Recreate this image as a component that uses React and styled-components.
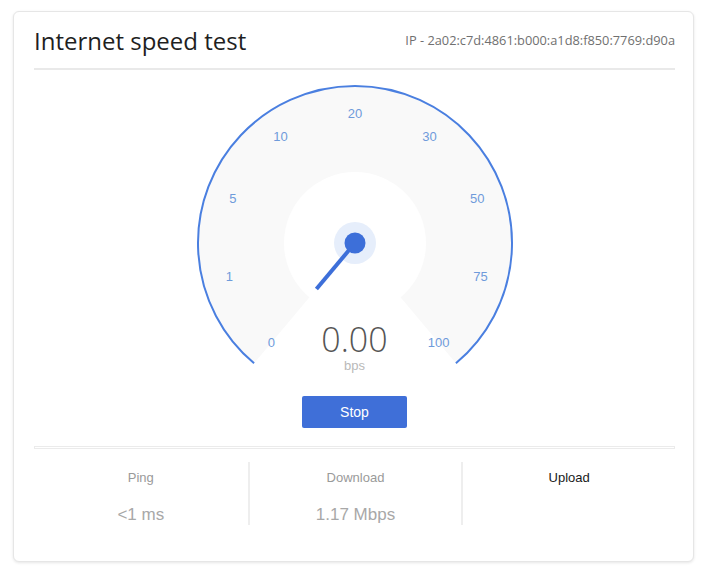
import React from 'react';
import styled, { createGlobalStyle } from 'styled-components';

const GlobalStyle = createGlobalStyle`
  html, body {
    margin: 0;
    padding: 0;
    background: #ffffff;
  }
  body {
    font-family: "Liberation Sans", Arial, sans-serif;
  }
`;

const Page = styled.div`
  padding: 11px 8px 5px 13px;
`;

const Card = styled.div`
  background: #fff;
  border: 1px solid #e6e6e6;
  border-radius: 6px;
  box-shadow: 0 1px 3px rgba(0, 0, 0, 0.1);
  padding: 0 18px 36px 20px;
`;

const Header = styled.div`
  display: flex;
  justify-content: space-between;
  align-items: center;
  height: 56px;
  border-bottom: 2px solid #e9e9e9;
`;

const Title = styled.h1`
  margin: 0;
  font-family: "Open Sans", sans-serif;
  font-weight: 400;
  font-size: 24px;
  color: #1f1f1f;
`;

const Ip = styled.span`
  font-family: "Open Sans", sans-serif;
  font-size: 12.8px;
  color: #707070;
`;

const GaugeWrap = styled.div`
  position: relative;
  width: 320px;
  height: 295px;
  margin: 13px auto 0;

  svg {
    display: block;
  }
`;

const Readout = styled.div`
  position: absolute;
  top: 238px;
  left: 0;
  right: 0;
  text-align: center;
`;

const Speed = styled.div`
  font-family: "Open Sans", sans-serif;
  font-weight: 300;
  font-size: 34px;
  line-height: 36px;
  color: #555;
`;

const Unit = styled.div`
  margin-top: 1px;
  font-size: 13px;
  line-height: 16px;
  color: #b9b9b9;
`;

const ButtonRow = styled.div`
  display: flex;
  justify-content: center;
  margin-top: 18px;
`;

const StopButton = styled.button`
  width: 105px;
  height: 32px;
  border: none;
  border-radius: 2px;
  background: #3f6fd8;
  color: #fff;
  font-family: "Liberation Sans", Arial, sans-serif;
  font-size: 14px;
  cursor: pointer;
`;

const Divider = styled.div`
  margin-top: 18px;
  height: 1px;
  border: 1px solid #ebebeb;
`;

const Stats = styled.div`
  display: grid;
  grid-template-columns: repeat(3, 1fr);
  margin-top: 13px;
`;

const Stat = styled.div`
  height: 63px;
  text-align: center;
  border-left: ${(props) => (props.first ? 'none' : '2px solid #eeeeee')};
`;

const StatLabel = styled.div`
  padding-top: 8px;
  font-size: 13px;
  line-height: 16px;
  color: ${(props) => (props.active ? '#1a1a1a' : '#9a9a9a')};
`;

const StatValue = styled.div`
  margin-top: 19px;
  font-size: 17px;
  line-height: 20px;
  color: #a8a8a8;
`;

const CX = 160;
const CY = 160;
const R = 157;
const INNER = 71;
const SPAN = 140;

const polar = (deg, r) => {
  const a = (deg * Math.PI) / 180;
  return [CX + r * Math.sin(a), CY - r * Math.cos(a)];
};

const marks = ['0', '1', '5', '10', '20', '30', '50', '75', '100'];

const Gauge = () => {
  const [sx, sy] = polar(-SPAN, R);
  const [ex, ey] = polar(SPAN, R);
  const [nx, ny] = polar(-SPAN, 60);

  return (
    <svg width="320" height="295" viewBox="0 0 320 295">
      <path
        d={`M ${CX} ${CY} L ${sx} ${sy} A ${R} ${R} 0 1 1 ${ex} ${ey} Z`}
        fill="#f9f9f9"
      />
      <circle cx={CX} cy={CY} r={INNER} fill="#fff" />
      <path
        d={`M ${sx} ${sy} A ${R} ${R} 0 1 1 ${ex} ${ey}`}
        fill="none"
        stroke="#4a7fe0"
        strokeWidth="2"
      />
      {marks.map((m, i) => {
        const [x, y] = polar(-SPAN + i * 35, 130);
        return (
          <text
            key={m}
            x={x}
            y={y}
            textAnchor="middle"
            dominantBaseline="central"
            fontFamily="Liberation Sans, Arial, sans-serif"
            fontSize="13"
            fill="#6f9bdb"
          >
            {m}
          </text>
        );
      })}
      <circle cx={CX} cy={CY} r="21" fill="#e6eefb" />
      <line x1={CX} y1={CY} x2={nx} y2={ny} stroke="#3d6fd9" strokeWidth="4" />
      <circle cx={CX} cy={CY} r="10.5" fill="#3d6fd9" />
    </svg>
  );
};

const App = () => {
  return (
    <>
      <GlobalStyle />
      <Page>
        <Card>
          <Header>
            <Title>Internet speed test</Title>
            <Ip>IP - 2a02:c7d:4861:b000:a1d8:f850:7769:d90a</Ip>
          </Header>
          <GaugeWrap>
            <Gauge />
            <Readout>
              <Speed>0.00</Speed>
              <Unit>bps</Unit>
            </Readout>
          </GaugeWrap>
          <ButtonRow>
            <StopButton>Stop</StopButton>
          </ButtonRow>
          <Divider />
          <Stats>
            <Stat first>
              <StatLabel>Ping</StatLabel>
              <StatValue>&lt;1 ms</StatValue>
            </Stat>
            <Stat>
              <StatLabel>Download</StatLabel>
              <StatValue>1.17 Mbps</StatValue>
            </Stat>
            <Stat>
              <StatLabel active>Upload</StatLabel>
            </Stat>
          </Stats>
        </Card>
      </Page>
    </>
  );
};

export default App;
